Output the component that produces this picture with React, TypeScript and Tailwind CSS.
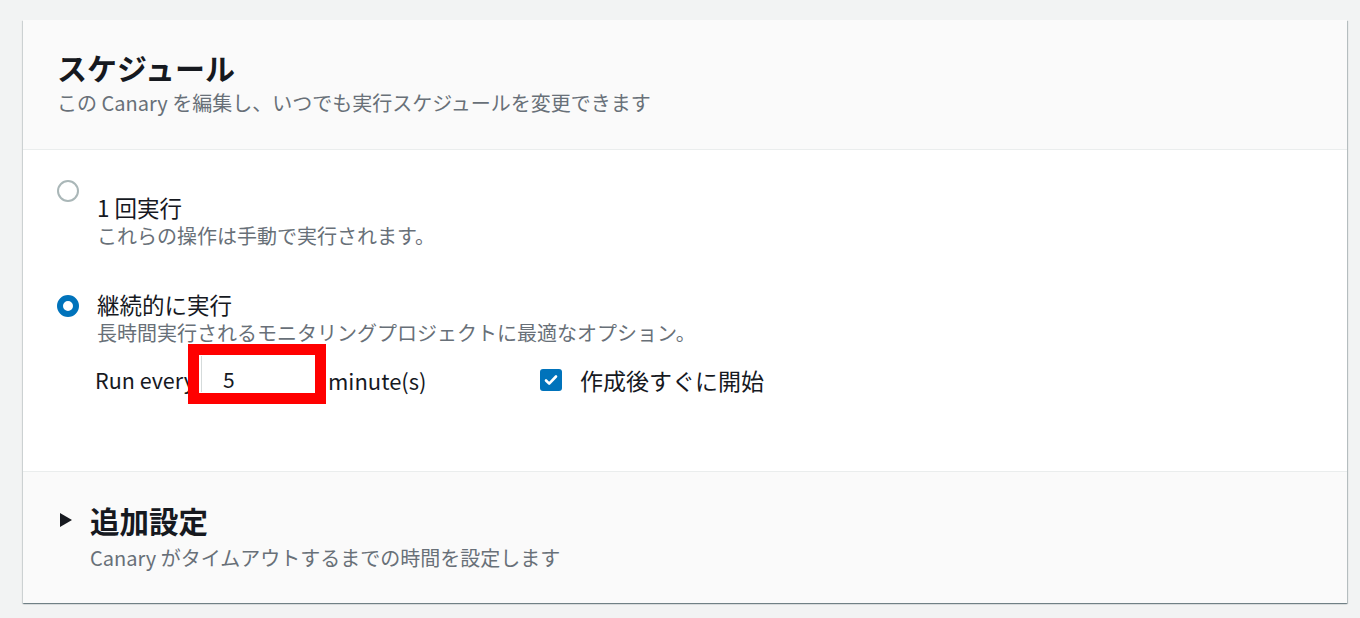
import React, { useState } from 'react';

const jp = { fontFamily: '"Noto Sans CJK JP", "Noto Sans", sans-serif' };

function Radio({ checked }: { checked: boolean }) {
  return checked ? (
    <span className="block h-[22px] w-[22px] shrink-0 rounded-full border-[6px] border-[#0073bb] bg-white" />
  ) : (
    <span className="block h-[22px] w-[22px] shrink-0 rounded-full border-2 border-[#aab7b8] bg-white" />
  );
}

function Checkbox() {
  return (
    <span className="flex h-[22px] w-[22px] shrink-0 items-center justify-center rounded-[3px] bg-[#0073bb]">
      <svg viewBox="0 0 16 16" className="h-[16px] w-[16px]">
        <path d="M3 8.5l3.2 3.2L13 4.5" fill="none" stroke="#fff" strokeWidth="2.6" strokeLinecap="round" strokeLinejoin="round" />
      </svg>
    </span>
  );
}

export default function App() {
  const [mode, setMode] = useState<'once' | 'continuous'>('continuous');

  return (
    <div className="h-[618px] w-[1360px] overflow-hidden bg-[#f2f3f3] pt-[20px]" style={jp}>
      <div className="ml-[23px] w-[1324px] bg-white shadow-[0_1px_1px_0_rgba(0,28,36,0.35),1px_1px_1px_0_rgba(0,28,36,0.2),-1px_1px_1px_0_rgba(0,28,36,0.1)]">
        {/* header */}
        <div className="h-[130px] border-b border-[#eaeded] bg-[#fafafa] pl-[34px] pt-[29px]">
          <h2 className="text-[30px] font-bold leading-[36px] text-[#16191f]">スケジュール</h2>
          <p className="mt-[6px] text-[20px] leading-[24px] text-[#687078]">
            この Canary を編集し、いつでも実行スケジュールを変更できます
          </p>
        </div>

        {/* body */}
        <div className="h-[321px] pl-[34px] pt-[30px]">
          <div className="flex gap-[18px]" onClick={() => setMode('once')}>
            <Radio checked={mode === 'once'} />
            <div className="pt-[13px]">
              <div className="text-[22.5px] leading-[28px] text-[#16191f]">1 回実行</div>
              <div className="mt-[3px] text-[20px] leading-[24px] text-[#687078]">
                これらの操作は手動で実行されます。
              </div>
            </div>
          </div>

          <div className="mt-[42px] flex gap-[18px]" onClick={() => setMode('continuous')}>
            <div className="pt-[5px]">
              <Radio checked={mode === 'continuous'} />
            </div>
            <div>
              <div className="text-[22.5px] leading-[28px] text-[#16191f]">継続的に実行</div>
              <div className="mt-[3px] text-[20px] leading-[24px] text-[#687078]">
                長時間実行されるモニタリングプロジェクトに最適なオプション。
              </div>
              <div className="-ml-[2px] mt-[11px] flex items-center">
                <span className="w-[104px] whitespace-nowrap text-[21.5px] text-[#16191f]">Run every</span>
                <div className="relative mb-[12px] h-[36px] w-[116px] bg-white">
                  <div className="ml-[2px] flex h-full items-center border-l border-[#d5dbdb] pl-[21px] pt-[12px] text-[21px] text-[#16191f]">
                    5
                  </div>
                  {/* annotation box */}
                  <div className="pointer-events-none absolute -bottom-[12px] -left-[11px] -right-[11px] -top-[12px] border-[11px] border-[#ff0000]" />
                </div>
                <span className="ml-[13px] w-[212px] text-[22px] text-[#16191f]">minute(s)</span>
                <Checkbox />
                <span className="ml-[18px] text-[23px] text-[#16191f]">作成後すぐに開始</span>
              </div>
            </div>
          </div>
        </div>

        {/* footer */}
        <div className="h-[132px] border-t border-[#eaeded] bg-[#fafafa] pl-[37px] pt-[31px]">
          <div className="flex items-center">
            <svg viewBox="0 0 12 14" className="h-[14px] w-[12px]">
              <path d="M0 0L12 7L0 14Z" fill="#16191f" />
            </svg>
            <h3 className="ml-[18px] text-[29.5px] font-bold leading-[34px] text-[#16191f]">追加設定</h3>
          </div>
          <p className="ml-[30px] mt-[9px] text-[20px] leading-[24px] text-[#687078]">
            Canary がタイムアウトするまでの時間を設定します
          </p>
        </div>
      </div>
    </div>
  );
}
